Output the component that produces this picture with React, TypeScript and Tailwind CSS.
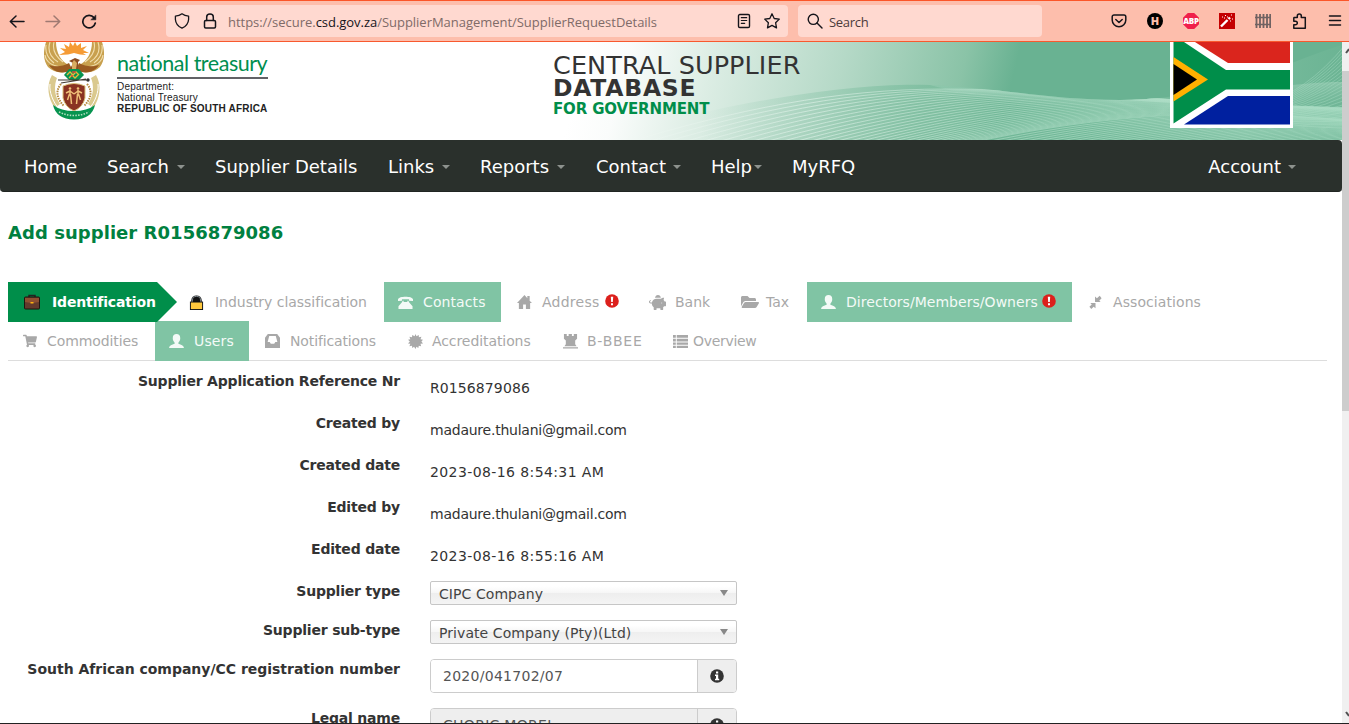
import React from "react";
import { FaPiggyBank, FaFolderOpen, FaShoppingCart } from "react-icons/fa";

const svgProps = { fill: "none", stroke: "#15141a", strokeWidth: 1.5, strokeLinecap: "round" as const, strokeLinejoin: "round" as const };

function BrowserBar() {
  return (
    <div className="flex h-[42px] shrink-0 items-center border-y border-t-[#fb5629] border-b-[#f8592f] bg-[#fdbeac] font-['Open_Sans',sans-serif] text-[13px] text-[#4b3b3b]">
      <svg className="ml-[9px] h-4 w-4" viewBox="0 0 16 16" {...svgProps}><path d="M15 8.500H1.500M7 3L1.300 8.500L7 14" /></svg>
      <svg className="ml-5 h-4 w-4 opacity-40" viewBox="0 0 16 16" {...svgProps}><path d="M1 8.500H14.500M9 3L14.700 8.500L9 14" /></svg>
      <svg className="ml-5 h-4 w-4" viewBox="0 0 16 16" {...svgProps} strokeWidth={1.7}><path d="M14.300 10A6.300 6.300 0 1 1 13 4.600" /><path d="M14.800 2.400V6.800H10.200Z" fill="#15141a" strokeWidth={0.6} /></svg>
      <div className="ml-[69px] flex h-8 w-[622px] shrink-0 items-center rounded bg-[#ffd9d0]">
        <svg className="ml-2 h-4 w-4" viewBox="0 0 16 16" {...svgProps} strokeWidth={1.3}><path d="M8 .8C10 2.400 12.300 3 14.600 3.100V6.500C14.300 10.800 11.700 13.600 8 15.200C4.300 13.600 1.700 10.800 1.400 6.500V3.100C3.700 3 6 2.400 8 .8Z" /></svg>
        <svg className="ml-3 h-4 w-4" viewBox="0 0 16 16" {...svgProps}><rect x="2.500" y="7.500" width="11" height="7.500" rx="1.200" /><path d="M4.700 7.500V4A3.300 3 0 0 1 11.300 4V7.500" /></svg>
        <span className="ml-[10px] w-[508px] whitespace-nowrap pt-[3px] tracking-[-0.03px] text-[#806b68]">https://secure.<span className="text-[#15141a]">csd.gov.za</span>/SupplierManagement/SupplierRequestDetails</span>
        <svg className="h-4 w-4" viewBox="0 0 16 16" {...svgProps} strokeWidth={1.4}><rect x="2.500" y="1.500" width="11" height="13" rx="1.300" /><path d="M5.300 4.700H10.700M5.300 7.500H10.700M5.300 10.300H8.700" strokeWidth={1.2} /></svg>
        <svg className="ml-3 h-4 w-4" viewBox="0 0 16 16" {...svgProps} strokeWidth={1.3}><path d="M8 .8L10.200 5.500L15.300 6.100L11.600 9.700L12.500 14.900L8 12.400L3.500 14.900L4.400 9.700L.7 6.100L5.800 5.500Z" /></svg>
      </div>
      <div className="ml-[10px] flex h-8 w-[244px] shrink-0 items-center rounded bg-[#ffd9d0]">
        <svg className="ml-[9px] h-4 w-4" viewBox="0 0 16 16" {...svgProps} strokeWidth={1.4}><circle cx="6.300" cy="6.300" r="5.100" /><path d="M10 10L15 15" /></svg>
        <span className="ml-[6px] pt-[3px] tracking-[-0.3px]">Search</span>
      </div>
      <div className="ml-[69px] flex items-center gap-5">
        <svg className="h-4 w-4" viewBox="0 0 16 16" {...svgProps}><path d="M3 2H13A1.800 1.800 0 0 1 14.800 3.800V7A6.800 6.800 0 0 1 1.200 7V3.800A1.800 1.800 0 0 1 3 2Z" /><path d="M4.800 6.500L8 9.500L11.200 6.500" /></svg>
        <div className="flex h-4 w-4 items-center justify-center rounded-full bg-black font-['Open_Sans',sans-serif] text-[11px] font-extrabold text-[#fdbeac]">H</div>
        <div className="flex h-4 w-4 items-center justify-center bg-[#f0204b] font-['Open_Sans',sans-serif] text-[8px] font-extrabold tracking-[-0.3px] text-white [clip-path:polygon(30%_0,70%_0,100%_30%,100%_70%,70%_100%,30%_100%,0_70%,0_30%)]">ABP</div>
        <svg className="h-4 w-4" viewBox="0 0 16 16"><path d="M0 0H16V16H0Z" fill="#c40000" /><path d="M2 13.500L8.500 7" stroke="#fff" strokeWidth="2.400" /><path d="M9.500 6L11 4.500" stroke="#fff" strokeWidth="2.400" /><path d="M3 4h1M6 2.500h1M5 5h1M8 4h1M12 2h1M11 8h1M13 6h1" stroke="#fff" strokeWidth="1" /></svg>
        <svg className="h-4 w-4" viewBox="0 0 16 16" stroke="#706262" fill="none"><path d="M1.500 1V15M5 1V15M8.500 1V15M12 1V15M15.200 1V15" strokeWidth="1.800" /><path d="M0 4.500H16M0 11.500H16" strokeWidth="1.400" /></svg>
        <svg className="h-4 w-4" viewBox="0 0 16 16" {...svgProps}><path d="M3 4.500H6.300V3A2 2 0 0 1 10.300 3V4.500H14.300V15.200H2.800V11.800H4.500A1.800 1.800 0 0 0 4.500 8.200H2.800V5.200Z" /></svg>
        <svg className="h-4 w-4" viewBox="0 0 16 16" {...svgProps}><path d="M2.500 3H13.500M2.500 7.500H13.500M2.500 12H13.500" /></svg>
      </div>
    </div>
  );
}

function CoatOfArms() {
  return (
    <svg className="h-[78px] w-[60px]" viewBox="0 0 60 78">
      {[-1, 1].map((s) => (
        <g key={s} transform={s === 1 ? "translate(60 0) scale(-1 1)" : undefined}>
          <path d="M2 0C-1 9 -1 18 4 25C10 31 19 32 27 28L25 23C17 20 12 10 12 0Z" fill="#c8a04e" />
          <path d="M2 3C1 10 3 16 10 21M6 0C3 9 6 15 14 20M10 0C8 8 11 14 19 20M1 13C2 20 8 24 18 25" fill="none" stroke="#f2dfae" strokeWidth="1.100" />
          <path d="M5 23C10 31 21 33 28 27L25 21C18 25 11 25 5 23Z" fill="#9a5b22" />
          <path d="M8 33C2 43 4 57 11 66L16 62C10 53 10 43 13 36Z" fill="#dac98e" />
          <path d="M6 42C5 50 9 60 15 67" fill="none" stroke="#fff" strokeWidth="1" />
          <path d="M17 42C11 49 13 57 20 64" fill="none" stroke="#b58a3d" strokeWidth="2" strokeDasharray="1.500 1" />
        </g>
      ))}
      <path d="M15 13L21 10L16 6L22 7L20 2L25 5L26 0L29 4L31 0L33 4L37 1L37 6L43 4L39 8L45 11L39 11L42 13L36 12.500L30 11L24 12.500Z" fill="#f59b35" />
      <path d="M25 19L31 16L36 18L34 20V28L30 33L26 27L29 21Z" fill="#8b4b22" />
      <path d="M28 21L30 18L33 21L32 27H28Z" fill="#d8ac61" />
      <path d="M20 33L25 27H35L40 33L35 38H25Z" fill="#079450" />
      <path d="M23 33L26 30L29 33L32 30L35 33M25 36L28 33L31 36L34 33" fill="none" stroke="#e4b93e" strokeWidth="1.300" />
      <path d="M28 30H32M27 34H29" stroke="#d64a35" strokeWidth="1.300" />
      <path d="M14 38L45 38M17 41L42 37" stroke="#423b32" strokeWidth="1.200" /><circle cx="44" cy="38" r="1.700" fill="#333" />
      <path d="M19 44Q30 39 41 44V56Q39 65 30 69Q21 65 19 56Z" fill="#8a3323" stroke="#dcc27a" />
      <path d="M26 48V53M25.500 52L23.500 58M26.500 52L27.500 62M26 49L30 52M34 48V53M34.500 52L36.500 58M33.500 52L32.500 62M34 49L30 52M22 51L26 49M38 51L34 49" stroke="#efc078" strokeWidth="1.500" fill="none" />
      <circle cx="26" cy="46.500" r="1.300" fill="#efc078" /><circle cx="34" cy="46.500" r="1.300" fill="#efc078" />
      <path d="M9 63Q17 69 30 69Q43 69 51 63Q48 77 30 77.500Q12 77 9 63Z" fill="#079450" />
      <path d="M15 70Q30 77 45 70" stroke="#b5dfc0" strokeWidth="1.600" strokeDasharray="1.500 1.300" fill="none" />
    </svg>
  );
}

const ridgePath = "M60 98C190 58 320 40 390 43C470 47 510 58 580 58C680 58 740 22 802 3V98Z";

function BannerBackground() {
  const lines = Array.from({ length: 62 }, (_, i) => i);
  const rays = Array.from({ length: 22 }, (_, i) => i);
  return (
    <svg className="absolute right-0 top-0 h-[98px] w-[802px]" viewBox="0 0 802 98" preserveAspectRatio="none">
      <defs>
        <linearGradient id="fade" gradientUnits="userSpaceOnUse" x1="40" y1="30" x2="450" y2="130">
          <stop offset="0" stopColor="#fff" />
          <stop offset=".1" stopColor="#fafcfb" />
          <stop offset=".3" stopColor="#dcede4" />
          <stop offset=".6" stopColor="#b5d9c7" />
          <stop offset=".88" stopColor="#8ac3a7" />
          <stop offset="1" stopColor="#69b292" />
        </linearGradient>
        <linearGradient id="ridge" gradientUnits="userSpaceOnUse" x1="160" y1="0" x2="802" y2="0">
          <stop offset="0" stopColor="#7dbfa0" stopOpacity="0" />
          <stop offset=".35" stopColor="#74b999" stopOpacity=".6" />
          <stop offset=".6" stopColor="#78bd9d" stopOpacity=".6" />
          <stop offset=".85" stopColor="#80c1a3" stopOpacity=".8" />
          <stop offset="1" stopColor="#6fb696" stopOpacity=".5" />
        </linearGradient>
        <linearGradient id="strokeFade" gradientUnits="userSpaceOnUse" x1="90" y1="0" x2="802" y2="0">
          <stop offset="0" stopColor="#f1f8f4" stopOpacity=".3" />
          <stop offset=".25" stopColor="#dff1e8" stopOpacity=".65" />
          <stop offset=".5" stopColor="#b4dfca" stopOpacity=".6" />
          <stop offset="1" stopColor="#a8dcc3" stopOpacity=".6" />
        </linearGradient>
        <linearGradient id="crest" x1="0" y1="0" x2="0" y2="1">
          <stop offset="0" stopColor="#a3d3bc" stopOpacity=".55" />
          <stop offset="1" stopColor="#69b292" stopOpacity="0" />
        </linearGradient>
        <clipPath id="ridgeClip"><path d={ridgePath} /></clipPath>
      </defs>
      <rect width="802" height="98" fill="url(#fade)" />
      <path d={ridgePath} fill="url(#ridge)" />
      <path d="M390 43C470 47 510 58 580 58C680 58 740 40 802 40V75C700 75 520 80 390 43Z" fill="url(#crest)" />
      <g clipPath="url(#ridgeClip)" fill="none" stroke="url(#strokeFade)" strokeWidth="1">
        {lines.map((i) => {
          const s = 85 + i * (19 - Math.min(i, 30) * 0.25);
          return <path key={i} d={`M${s} 101C${s + 110} ${68 + i * 0.3} ${s + 210} ${47 + i * 0.7} ${s + 320} ${47 + i * 0.9}S${s + 480} ${60 + i * 0.7} ${s + 600} ${62 + i * 0.5}`} />;
        })}
        {rays.map((i) => <path key={`r${i}`} d={`M720 ${62 + i * 0.8}Q765 ${52 + i * 1.6} 806 ${2 + i * 4}`} strokeOpacity=".7" />)}
      </g>
    </svg>
  );
}

function Flag() {
  return (
    <svg className="absolute right-[49px] top-0 h-[86px] w-[123px]" viewBox="0 0 123 86">
      <path d="M0 0H123V86H0Z" fill="#fff" />
      <path d="M25 0H120V21H58Z" fill="#da251d" />
      <path d="M58 54H120V82.500H14Z" fill="#00209f" />
      <path d="M3.500 0H14L56 28H120V47.500H56L3.500 81.500Z" fill="#008e4a" />
      <path d="M3.500 15L38 37.500L3.500 59.500Z" fill="#ffb000" />
      <path d="M3.500 22L27 37.500L3.500 53Z" fill="#000" />
    </svg>
  );
}

function Banner() {
  return (
    <header className="relative flex h-[98px] shrink-0 overflow-hidden bg-white">
      <BannerBackground />
      <Flag />
      <div className="relative ml-11 flex w-[509px] items-start">
        <CoatOfArms />
        <div className="ml-[13px] mt-[9px] font-['Liberation_Sans',sans-serif] text-[10px] leading-[11px] text-[#222]">
          <div className="h-[28px] w-[151px] whitespace-nowrap border-b-2 border-[#626266] font-[Lato,sans-serif] text-[21.500px] leading-[25px] tracking-[-0.47px] text-[#008e4f]">national treasury</div>
          <div className="mt-[2px] tracking-[0.2px]">Department:</div>
          <div className="tracking-[0.15px]">National Treasury</div>
          <div className="whitespace-nowrap font-bold tracking-[0.2px]">REPUBLIC OF SOUTH AFRICA</div>
        </div>
      </div>
      <div className="relative whitespace-nowrap pt-[11px] text-[#333]">
        <div className="text-[25.500px] leading-[24px] tracking-[0.08px]">CENTRAL SUPPLIER</div>
        <div className="text-[23.500px] font-bold leading-[23px] tracking-[0.75px]">DATABASE</div>
        <div className="text-[15px] font-bold leading-[18px] tracking-[-0.15px] text-[#008e4a]">FOR GOVERNMENT</div>
      </div>
    </header>
  );
}

function Caret() {
  return <span className="mt-px border-x-4 border-t-4 border-x-transparent border-t-[#8d928e]" />;
}

function Navigation() {
  return (
    <nav className="flex h-[52px] shrink-0 items-center rounded-r-[4px] rounded-bl-[4px] border-b border-[#202522] bg-[#2a302c] pl-6 pt-[2px] text-[18px] text-white">
      <span className="w-[83px]">Home</span>
      <span className="flex w-[108px] items-center gap-2">Search <Caret /></span>
      <span className="w-[173px] whitespace-nowrap">Supplier Details</span>
      <span className="flex w-[92px] items-center gap-2">Links <Caret /></span>
      <span className="flex w-[116px] items-center gap-2">Reports <Caret /></span>
      <span className="flex w-[115px] items-center gap-[7px]">Contact <Caret /></span>
      <span className="flex w-[81px] items-center gap-[2px]">Help<Caret /></span>
      <span>MyRFQ</span>
      <span className="ml-auto mr-[46px] flex items-center gap-[7px]">Account <Caret /></span>
    </nav>
  );
}

type GlyphName = "case" | "lock" | "phone" | "home" | "user" | "compress" | "inbox" | "burst" | "tower" | "list";

const glyphs: Record<GlyphName, React.ReactNode> = {
  case: <><path d="M5 4V1.500H11V4" fill="none" stroke="#222" strokeWidth="1.500" /><rect x=".5" y="3" width="15" height="12" rx="1" fill="#633a2d" stroke="#21150f" /><path d="M1 4H15V8L9 9H7L1 8Z" fill="#8e5031" /><path d="M6.500 8H9.500V9.500H6.500Z" fill="#ffb30f" /></>,
  lock: <><path d="M2.500 8V5.500A5.500 5 0 0 1 13.500 5.500V8Z" fill="#111" /><path d="M3.700 7.500V5.500A4.300 4 0 0 1 12.300 5.500V7.500" fill="none" stroke="#889299" strokeWidth="1" /><rect x="1.500" y="7.500" width="13" height="8" fill="#ffc83d" stroke="#111" /></>,
  phone: <path d="M0 6.500V4.500C1 1 15 1 16 4.500V6.500L11.800 6V4.500H4.200V6ZM5 6H6V7.500H10V6H11L12 8L15.500 12V15H.5V12L4 8Z" />,
  home: <path d="M8 0L0 8.500H2V15H6.500V10H9.500V15H14V8.500H16L13.500 6V1H11V3.500Z" />,
  user: <path d="M8 0C5.500 0 4 1.500 4 4.500C4 7 5.200 8 6 9.200V10.500C3 11.500 .5 12.200 0 15H16C15.500 12.200 13 11.500 10 10.500V9.200C10.800 8 12 7 12 4.500C12 1.500 10.500 0 8 0Z" />,
  compress: <path d="M14.500 3.500L12 6L13.500 7.500H7.500V1.500L9.500 3.500L12.500 .8ZM1.500 12.500L4 10L2.500 8.500H8V14L6 12.500L3.500 14.800Z" />,
  inbox: <path fillRule="evenodd" d="M3 0H13L16 4V15H0V4ZM4.500 2L2.800 8.500H5L6.200 10.500H9.800L11 8.500H13.200L11.500 2Z" />,
  burst: <path d="M8 0L9 2.500L11.500 1L11.600 3.500L14.300 3L13.300 5.500L16 6L14.300 8L16 10L13.300 10.500L14 13L11.500 12.500L11 15L9 13.500L8 16L6.500 13.500L4.500 15L4.300 12.500L1.500 13L2.500 10.500L0 10L2 8L0 6L2.500 5.500L1.500 3L4.300 3.500L4.500 1L7 2.500Z" />,
  tower: <path d="M1 0H4V2H6V0H9.500V2H11.500V0H15V5L13 7V11L14.500 13H1.500L3 11V7L1 5ZM0 14H16V15.500H0Z" />,
  list: <path d="M0 1H3V4H0ZM4 1H16V4H4ZM0 5H3V8H0ZM4 5H16V8H4ZM0 9H3V11.500H0ZM4 9H16V11.500H4ZM0 12.500H3V15H0ZM4 12.500H16V15H4Z" />,
};

function Glyph({ name }: { name: GlyphName }) {
  return <svg className="h-[15px] w-[15px] shrink-0" viewBox="0 0 16 16" fill="currentColor">{glyphs[name]}</svg>;
}

function Alert() {
  return (
    <svg className="mb-[2px] ml-[5px] h-[14px] w-[14px] shrink-0" viewBox="0 0 14 14">
      <circle cx="7" cy="7" r="6.800" fill="#dc201c" /><path d="M5.800 2.700H8.200L7.800 8H6.200ZM6 9.300H8V11.300H6Z" fill="#fff" />
    </svg>
  );
}

function Tab({ className, icon, label, alert }: { className: string; icon: React.ReactNode; label: string; alert?: boolean }) {
  return <div className={`flex h-10 shrink-0 items-center whitespace-nowrap ${className}`}>{icon}<span>{label}</span>{alert && <Alert />}</div>;
}

const active = "bg-[#80c4a4] text-[#f4faf7]";

function Tabs() {
  return (
    <div className="ml-2 mt-[37px] w-[1319px] border-b border-[#ddd] text-[14px] text-[#a8a8a8]">
      <div className="flex h-[39px]">
        <Tab className="w-[169px] gap-[12px] bg-[#008e4a] pl-4 font-bold tracking-[-0.15px] text-white [&>svg]:h-4 [&>svg]:w-4 [clip-path:polygon(0_0,149px_0,100%_50%,149px_100%,0_100%)]" icon={<Glyph name="case" />} label="Identification" />
        <Tab className="w-[207px] gap-[11px] pl-3 tracking-[-0.03px]" icon={<Glyph name="lock" />} label="Industry classification" />
        <Tab className={`w-[117px] gap-[10px] pl-[14px] tracking-[0.1px] ${active}`} icon={<Glyph name="phone" />} label="Contacts" />
        <Tab className="w-[132px] gap-[9px] pl-4 tracking-[0.25px] [&>span]:ml-px [&>svg:last-child]:-ml-[4px]" icon={<Glyph name="home" />} label="Address" alert />
        <Tab className="w-[92px] gap-[9px] pl-[16px]" icon={<FaPiggyBank size={17} />} label="Bank" />
        <Tab className="w-[82px] gap-[7px] pl-4" icon={<FaFolderOpen size={18} />} label="Tax" />
        <Tab className={`w-[265px] gap-[10px] pl-[14px] tracking-[0.04px] [&>svg:last-child]:-ml-[6px] ${active}`} icon={<Glyph name="user" />} label="Directors/Members/Owners" alert />
        <Tab className="gap-[10px] pl-4 tracking-[0.08px]" icon={<Glyph name="compress" />} label="Associations" />
      </div>
      <div className="flex h-[39px]">
        <Tab className="w-[147px] gap-[10px] pl-[15px] tracking-[-0.1px]" icon={<FaShoppingCart size={14} />} label="Commodities" />
        <Tab className={`w-[94px] gap-[10px] pl-[14px] tracking-[0.15px] ${active}`} icon={<Glyph name="user" />} label="Users" />
        <Tab className="w-[143px] gap-[10px] pl-4 tracking-[-0.13px]" icon={<Glyph name="inbox" />} label="Notifications" />
        <Tab className="w-[155px] gap-[9px] pl-4 tracking-[-0.08px]" icon={<Glyph name="burst" />} label="Accreditations" />
        <Tab className="w-[110px] gap-[9px] pl-4 tracking-[0.75px]" icon={<Glyph name="tower" />} label="B-BBEE" />
        <Tab className="gap-[5px] pl-4 tracking-[-0.3px]" icon={<Glyph name="list" />} label="Overview" />
      </div>
    </div>
  );
}

function Row({ label, height, tracking = "tracking-[-0.2px]", children }: { label: string; height: string; tracking?: string; children: React.ReactNode }) {
  return (
    <div className={`flex shrink-0 items-start ${height}`}>
      <div className={`w-[400px] whitespace-nowrap text-right font-bold leading-5 ${tracking}`}>{label}</div>
      <div className="ml-[30px] w-[307px] whitespace-nowrap">{children}</div>
    </div>
  );
}

function Picker({ value }: { value: string }) {
  return (
    <div className="flex h-6 items-center justify-between rounded-[2px] border border-[#c6c6c6] bg-[linear-gradient(#fff_20%,#f6f6f6_50%,#eee_52%,#f4f4f4_100%)] pl-2 pr-2 text-[#444]">
      <span className="pt-[2px] tracking-[0.07px]">{value}</span>
      <span className="border-x-4 border-t-[6px] border-x-transparent border-t-[#888]" />
    </div>
  );
}

function InfoField({ value, disabled }: { value: string; disabled?: boolean }) {
  return (
    <div className="flex h-[34px] overflow-hidden rounded border border-[#ccc] text-[#555]">
      <div className={`flex w-[267px] items-center border-r border-[#ccc] pl-3 tracking-[0.28px] ${disabled ? "bg-[#eee]" : "bg-white"}`}>{value}</div>
      <div className="flex flex-1 items-center justify-center bg-[#eee]">
        <svg className="h-[14px] w-[14px]" viewBox="0 0 14 14"><circle cx="7" cy="7" r="6.800" fill="#333" /><path d="M6 2.400H8.200V4.400H6ZM5 5.600H8.200V9.800H9.200V11.300H5V9.800H6V7H5Z" fill="#fff" /></svg>
      </div>
    </div>
  );
}

const details = [
  ["Supplier Application Reference Nr", "R0156879086", "tracking-[0.1px]"],
  ["Created by", "madaure.thulani@gmail.com", "tracking-[-0.24px]"],
  ["Created date", "2023-08-16 8:54:31 AM", "tracking-[0.4px]"],
  ["Edited by", "madaure.thulani@gmail.com", "tracking-[-0.24px]"],
  ["Edited date", "2023-08-16 8:55:16 AM", "tracking-[0.4px]"],
];

export default function App() {
  return (
    <div className="flex h-[724px] w-[1349px] flex-col overflow-hidden border-b border-[#222] bg-white font-['DejaVu_Sans',sans-serif] text-[14px] text-[#333]">
      <BrowserBar />
      <div className="flex min-h-0 flex-1">
        <main className="flex w-[1342px] shrink-0 flex-col overflow-hidden">
          <Banner />
          <Navigation />
          <h1 className="ml-2 mt-[29px] h-6 text-[18px] font-bold leading-6 tracking-[0.05px] text-[#008040]">Add supplier R0156879086</h1>
          <Tabs />
          <section className="mt-[10px] flex flex-col">
            {details.map(([label, value, tracking]) => <Row key={label} label={label} height="h-[42px]"><div className={`pt-[7px] leading-5 ${tracking}`}>{value}</div></Row>)}
            <Row label="Supplier type" height="h-[39px]"><Picker value="CIPC Company" /></Row>
            <Row label="Supplier sub-type" height="h-[39px]"><Picker value="Private Company (Pty)(Ltd)" /></Row>
            <Row label="South African company/CC registration number" height="h-[49px]" tracking="tracking-[-0.02px]"><InfoField value="2020/041702/07" /></Row>
            <Row label="Legal name" height="h-[49px]"><InfoField value="CHORIC MOREI" disabled /></Row>
          </section>
        </main>
        <aside className="flex w-[7px] flex-col bg-[#f0f0f0]">
          <svg className="h-[29px] w-[7px]" viewBox="0 0 7 29"><path d="M4 11L7 7" stroke="#505050" strokeWidth="2" /></svg>
          <div className="h-[340px] bg-[#cdcdcd]" />
          <svg className="mt-auto h-[16px] w-[7px]" viewBox="0 0 7 16"><path d="M4 5L7 9" stroke="#505050" strokeWidth="2" /></svg>
        </aside>
      </div>
    </div>
  );
}
